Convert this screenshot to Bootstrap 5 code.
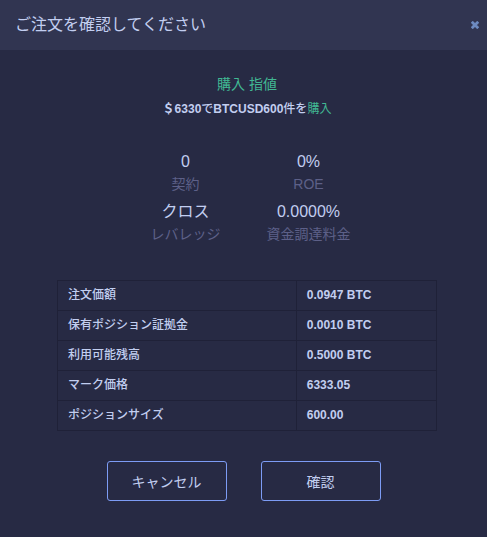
<!DOCTYPE html>
<html lang="ja">
<head>
<meta charset="utf-8">
<meta name="viewport" content="width=device-width, initial-scale=1">
<title>ご注文を確認してください</title>
<link href="https://cdn.jsdelivr.net/npm/bootstrap@5.3.0/dist/css/bootstrap.min.css" rel="stylesheet">
<style>
body { background: #272a44; color: #c2cef0; font-family: "Liberation Sans", "Noto Sans CJK JP", sans-serif; font-size: 14px; line-height: 20px; }
.order-header { background: #313551; height: 50px; padding: 0 8px 0 15px; }
.order-title { font-size: 16px; line-height: 24px; font-weight: 400; }
.close-btn { line-height: 0; }
.order-body { padding: 24px 50px 34px 57px; }
.buy { color: #41b893; font-weight: 400; }
.order-kind { font-size: 14px; line-height: 20px; }
.order-text { font-size: 12px; line-height: 20px; margin-top: 5px; font-weight: 700; }
.jp { font-weight: 500; }
.stats { width: 246px; margin-top: 32px; row-gap: 6px; }
.stat-value { font-size: 16px; line-height: 22px; }
.stat-name { color: #5d6088; line-height: 22px; }
.order-table { margin-top: 35px; font-size: 12px; line-height: 17px; border-collapse: collapse; border: 1px solid #1f2138; }
.order-table th, .order-table td { height: 30px; padding: 6px 10px; border: 1px solid #1f2138; }
.order-table th { width: 63%; font-weight: 500; }
.order-table td { font-weight: 700; }
.order-actions { gap: 34px; margin-top: 30px; margin-left: -7px; }
.action-btn { width: 120px; height: 40px; padding: 2px 0 0; font-size: 14px; line-height: 20px; color: #c2cef0; border: 1px solid #7d9cf5; border-radius: 3px; }
.action-btn:hover { color: #fff; background: #313551; border-color: #7d9cf5; }
</style>
<script src="https://cdn.jsdelivr.net/npm/bootstrap@5.3.0/dist/js/bootstrap.bundle.min.js"></script>
</head>
<body>
<main>
  <header class="order-header d-flex align-items-center justify-content-between">
    <h1 class="order-title m-0">ご注文を確認してください</h1>
    <button type="button" class="close-btn btn p-0 border-0" aria-label="閉じる">
      <svg width="8" height="8" viewBox="0 0 8 8" fill="none" stroke="#6d8ac0" stroke-width="2.8" aria-hidden="true"><path d="M.8 .8 7.2 7.2M7.2 .8 .8 7.2"/></svg>
    </button>
  </header>
  <div class="order-body">
    <div class="text-center">
      <p class="order-kind buy m-0">購入 指値</p>
      <p class="order-text mb-0">＄6330<span class="jp">で</span>BTCUSD600<span class="jp">件を</span><span class="buy">購入</span></p>
    </div>
    <div class="stats row g-0 mx-auto mb-0 text-center">
      <div class="col-6"><div class="stat-value">0</div><div class="stat-name">契約</div></div>
      <div class="col-6"><div class="stat-value">0%</div><div class="stat-name">ROE</div></div>
      <div class="col-6"><div class="stat-value">クロス</div><div class="stat-name">レバレッジ</div></div>
      <div class="col-6"><div class="stat-value">0.0000%</div><div class="stat-name">資金調達料金</div></div>
    </div>
    <table class="order-table w-100">
      <tbody>
        <tr><th scope="row">注文価額</th><td>0.0947 BTC</td></tr>
        <tr><th scope="row">保有ポジション証拠金</th><td>0.0010 BTC</td></tr>
        <tr><th scope="row">利用可能残高</th><td>0.5000 BTC</td></tr>
        <tr><th scope="row">マーク価格</th><td>6333.05</td></tr>
        <tr><th scope="row">ポジションサイズ</th><td>600.00</td></tr>
      </tbody>
    </table>
    <div class="order-actions d-flex justify-content-center">
      <button type="button" class="btn action-btn">キャンセル</button>
      <button type="button" class="btn action-btn">確認</button>
    </div>
  </div>
</main>
</body>
</html>
